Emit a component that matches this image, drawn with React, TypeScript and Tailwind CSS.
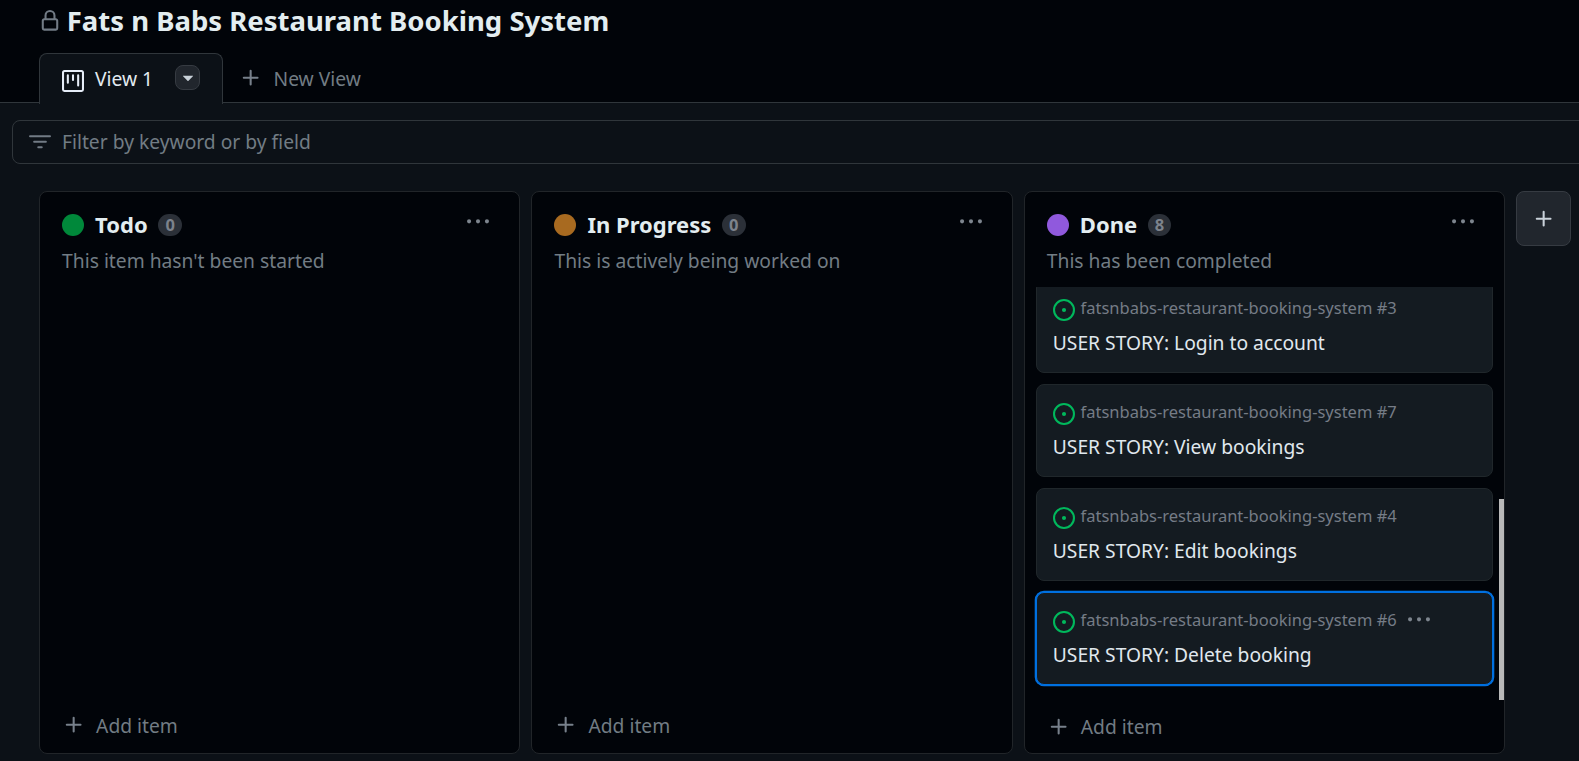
import React from "react";

const iconPaths = {
  lock: "M4 4a4 4 0 0 1 8 0v2h.25c.966 0 1.75.784 1.75 1.75v5.5A1.75 1.75 0 0 1 12.25 15h-8.5A1.75 1.75 0 0 1 2 13.25v-5.5C2 6.784 2.784 6 3.75 6H4Zm8.25 3.5h-8.5a.25.25 0 0 0-.25.25v5.5c0 .138.112.25.25.25h8.5a.25.25 0 0 0 .25-.25v-5.5a.25.25 0 0 0-.25-.25ZM10.5 6V4a2.5 2.5 0 1 0-5 0v2Z",
  project:
    "M1.75 0h12.5C15.216 0 16 .784 16 1.75v12.5A1.75 1.75 0 0 1 14.25 16H1.75A1.75 1.75 0 0 1 0 14.25V1.75C0 .784.784 0 1.75 0ZM1.5 1.75v12.5c0 .138.112.25.25.25h12.5a.25.25 0 0 0 .25-.25V1.75a.25.25 0 0 0-.25-.25H1.75a.25.25 0 0 0-.25.25ZM11.75 3a.75.75 0 0 1 .75.75v7.5a.75.75 0 0 1-1.5 0v-7.5a.75.75 0 0 1 .75-.75Zm-8.25.75a.75.75 0 0 1 1.5 0v5.5a.75.75 0 0 1-1.5 0ZM8 3a.75.75 0 0 1 .75.75v3.5a.75.75 0 0 1-1.5 0v-3.5A.75.75 0 0 1 8 3Z",
  triangleDown:
    "m4.427 7.427 3.396 3.396a.25.25 0 0 0 .354 0l3.396-3.396A.25.25 0 0 0 11.396 7H4.604a.25.25 0 0 0-.177.427Z",
  plus: "M7.75 2a.75.75 0 0 1 .75.75V7h4.25a.75.75 0 0 1 0 1.5H8.5v4.25a.75.75 0 0 1-1.5 0V8.5H2.75a.75.75 0 0 1 0-1.5H7V2.75A.75.75 0 0 1 7.75 2Z",
  filter:
    "M.75 3h14.5a.75.75 0 0 1 0 1.5H.75a.75.75 0 0 1 0-1.5ZM3 7.75A.75.75 0 0 1 3.75 7h8.5a.75.75 0 0 1 0 1.5h-8.5A.75.75 0 0 1 3 7.75Zm3 4a.75.75 0 0 1 .75-.75h2.5a.75.75 0 0 1 0 1.5h-2.5a.75.75 0 0 1-.75-.75Z",
  kebab:
    "M8 9a1.5 1.5 0 1 0 0-3 1.5 1.5 0 0 0 0 3ZM1.5 9a1.5 1.5 0 1 0 0-3 1.5 1.5 0 0 0 0 3Zm13 0a1.5 1.5 0 1 0 0-3 1.5 1.5 0 0 0 0 3Z",
  issue:
    "M8 9.5a1.5 1.5 0 1 0 0-3 1.5 1.5 0 0 0 0 3ZM8 0a8 8 0 1 1 0 16A8 8 0 0 1 8 0ZM1.5 8a6.5 6.5 0 1 0 13 0 6.5 6.5 0 0 0-13 0Z",
};

function Icon({ name, className }: { name: keyof typeof iconPaths; className: string }) {
  return (
    <svg viewBox="0 0 16 16" fill="currentColor" aria-hidden="true" className={`size-[22px] shrink-0 ${className}`}>
      <path d={iconPaths[name]} />
    </svg>
  );
}

type Item = { number: number; title: string; selected?: boolean };

const doneItems: Item[] = [
  { number: 3, title: "USER STORY: Login to account" },
  { number: 7, title: "USER STORY: View bookings" },
  { number: 4, title: "USER STORY: Edit bookings" },
  { number: 6, title: "USER STORY: Delete booking", selected: true },
];

function Card({ item }: { item: Item }) {
  return (
    <article
      className={`h-[93px] shrink-0 rounded-[8px] border bg-[#141b21] px-[16px] pt-[18px] ${
        item.selected ? "border-[#0070e0] ring-[1.3px] ring-[#0070e0]" : "border-[#20272b]"
      }`}
    >
      <div className="flex h-[22px] items-center">
        <Icon name="issue" className="text-[#00b85c]" />
        <span className="-mt-[5px] ml-[5.75px] text-[16.5px] leading-[22px] text-[#757c86]">
          fatsnbabs-restaurant-booking-system #{item.number}
        </span>
        {item.selected && <Icon name="kebab" className="-mt-[4px] ml-[11.25px] text-[#7d858e]" />}
      </div>
      <p className="mt-[9px] text-[19.25px] leading-[26px] text-[#e0e8ee]">{item.title}</p>
    </article>
  );
}

type ColumnProps = {
  name: string;
  count: number;
  description: string;
  dot: string;
  items?: Item[];
};

function Column({ name, count, description, dot, items }: ColumnProps) {
  return (
    <section className="flex h-[563px] w-[481.35px] shrink-0 flex-col rounded-[8px] border border-[#212529] bg-[#010409]">
      <header className="h-[95px] shrink-0 px-[22px] pt-[18px]">
        <div className="flex h-[30px] items-center">
          <span className={`size-[22px] rounded-full ${dot}`} />
          <h2 className="-mt-[2px] ml-[11px] text-[22px] leading-[30px] font-bold text-[#e3edf0]">{name}</h2>
          <span className="ml-[10.75px] flex h-[22px] min-w-[23.5px] items-center justify-center rounded-full bg-[#2b3038] text-[16.5px] leading-[22px] font-bold text-[#7d838c]">
            {count}
          </span>
          <Icon name="kebab" className="-mt-[6px] mr-[8px] ml-auto text-[#7d858e]" />
        </div>
        <p className="mt-[7px] text-[19.25px] leading-[28px] text-[#727c84]">{description}</p>
      </header>
      <div className="relative flex flex-1 flex-col justify-end overflow-hidden pr-[11px] pb-[15px] pl-[11px]">
        {items && (
          <>
            <div className="flex flex-col gap-[11px]">
              {items.map((item) => (
                <Card key={item.number} item={item} />
              ))}
            </div>
            <div className="absolute right-0 bottom-0 h-[201px] w-[5px] bg-[#b9b9b9]" />
          </>
        )}
      </div>
      <footer className={`flex h-[53px] shrink-0 items-center pl-[23px] ${items ? "" : "pb-[2px]"}`}>
        <Icon name="plus" className={`text-[#77808b] ${items ? "" : "-mt-[2px]"}`} />
        <span className="ml-[11px] text-[19.25px] leading-[26px] text-[#727c84]">Add item</span>
      </footer>
    </section>
  );
}

export default function App() {
  return (
    <div className="flex h-[761px] w-[1579px] flex-col overflow-hidden bg-[#0c1117] font-['Noto_Sans',sans-serif]">
      <div className="flex h-[103px] shrink-0 flex-col justify-between border-b border-[#30363b] bg-[#010409]">
        <div className="flex h-[42px] items-center pl-[39px]">
          <Icon name="lock" className="text-[#727b85]" />
          <h1 className="ml-[5.75px] text-[27.5px] leading-[42px] font-bold text-[#e3edf0]">
            Fats n Babs Restaurant Booking System
          </h1>
        </div>
        <nav className="-mb-[2px] flex h-[51px] pl-[39px]">
          <div className="flex w-[184px] items-center rounded-t-[8px] border border-b-0 border-[#30363b] bg-[#0c1117] pl-[22px]">
            <Icon name="project" className="mt-[4px] text-[#e6edf8]" />
            <span className="ml-[11px] text-[19.25px] leading-[26px] text-[#e3eaf0]">View 1</span>
            <button className="-mt-[3px] ml-[22px] flex size-[25px] items-center justify-center rounded-[8px] border border-[#363b42] bg-[#21262d]">
              <Icon name="triangleDown" className="-mt-[1px] text-[#c9d1d9]" />
            </button>
          </div>
          <div className="flex items-center pl-[17px]">
            <Icon name="plus" className="-mt-[1px] text-[#77808b]" />
            <span className="ml-[11.5px] text-[19.25px] leading-[26px] text-[#727c84]">New View</span>
          </div>
        </nav>
      </div>

      <div className="mt-[17px] -mr-3 ml-[12px] flex h-[44px] shrink-0 items-center rounded-[8px] border border-[#30363b] pl-[16px]">
        <Icon name="filter" className="text-[#727b85]" />
        <span className="ml-[11px] text-[19.25px] leading-[26px] text-[#727c84]">
          Filter by keyword or by field
        </span>
      </div>

      <main className="mt-[27px] flex gap-[11px] pl-[39.1px]">
        <Column name="Todo" count={0} description="This item hasn't been started" dot="bg-[#00883a]" />
        <Column name="In Progress" count={0} description="This is actively being worked on" dot="bg-[#a86a20]" />
        <Column name="Done" count={8} description="This has been completed" dot="bg-[#9059dd]" items={doneItems} />
        <button className="flex size-[55px] shrink-0 items-center justify-center rounded-[8px] border border-[#363b42] bg-[#21262d]">
          <Icon name="plus" className="text-[#c9d1d9]" />
        </button>
      </main>
    </div>
  );
}
